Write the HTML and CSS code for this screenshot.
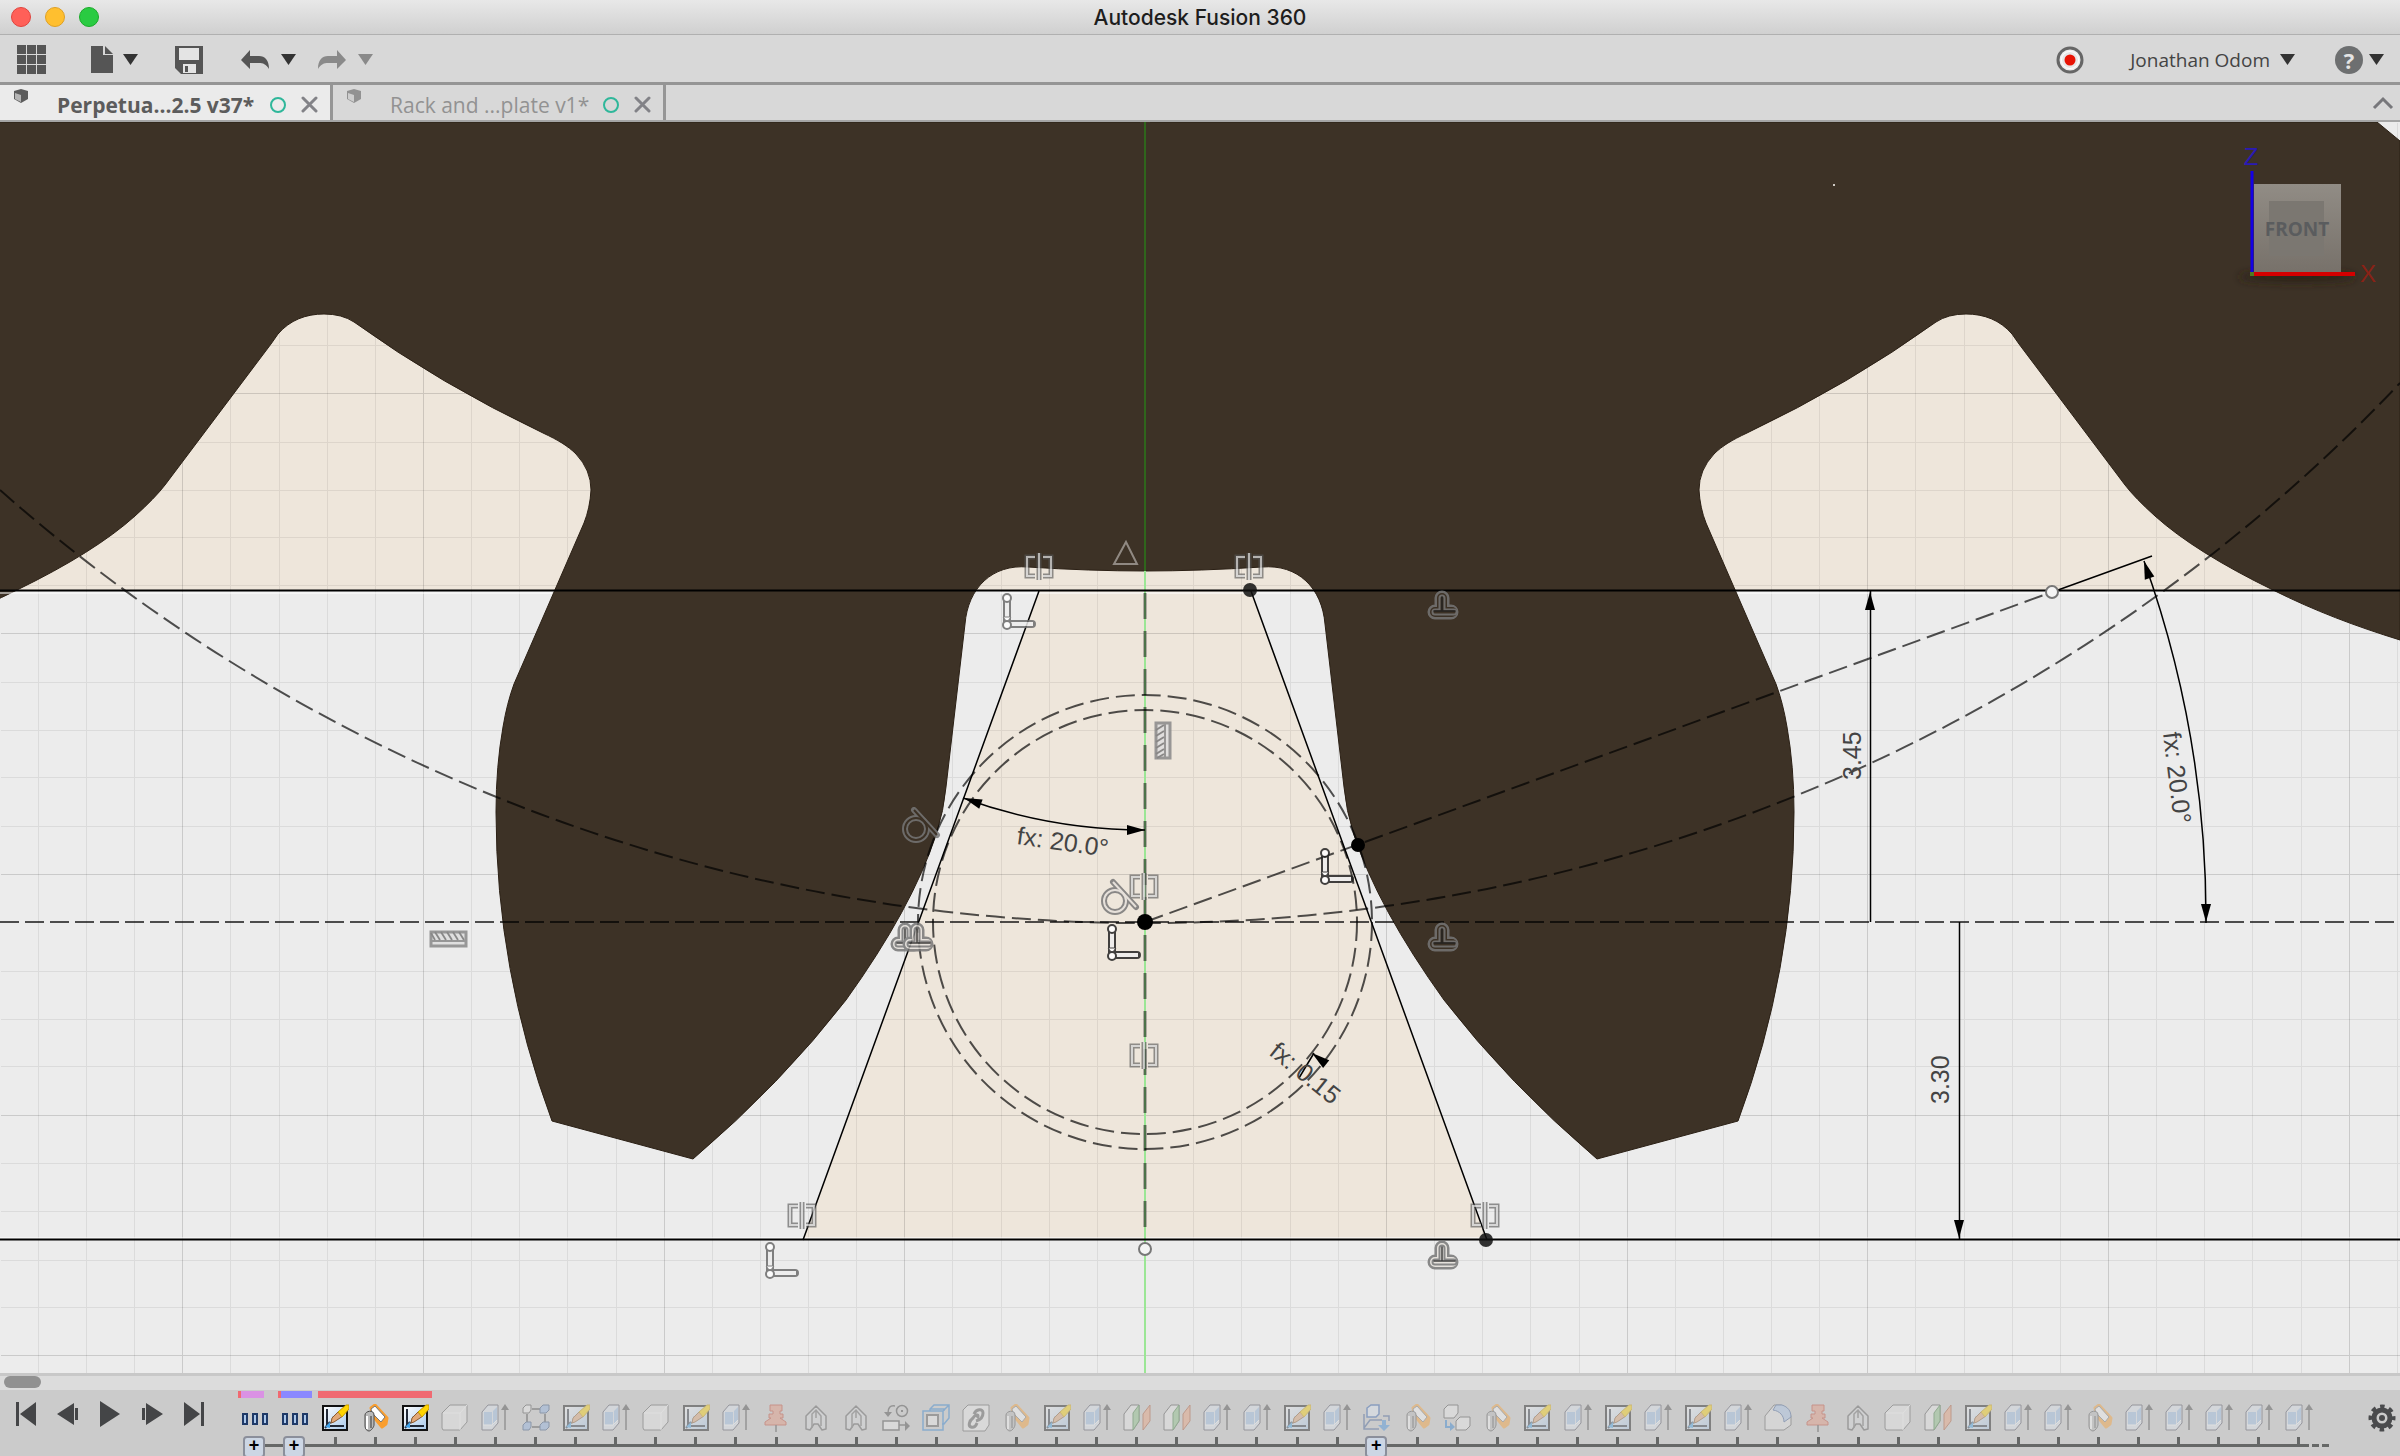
FILE: index.html
```html
<!DOCTYPE html>
<html lang="en">
<head>
<meta charset="utf-8">
<title>Autodesk Fusion 360</title>
<link rel="stylesheet" href="styles.css">
</head>
<body>
<svg class="defs" aria-hidden="true">
  <defs>
    <linearGradient id="paper" x1="0" y1="0" x2="1" y2="1"><stop offset="0" stop-color="#fff"/><stop offset="1" stop-color="#a9c9ea"/></linearGradient>
    <linearGradient id="cubeFace" x1="0" y1="0" x2="0" y2="1"><stop offset="0" stop-color="#918c85"/><stop offset="1" stop-color="#77716a"/></linearGradient>
    <filter id="soft" x="-20%" y="-200%" width="140%" height="500%"><feGaussianBlur stdDeviation="4"/></filter>

    <symbol id="i-group" viewBox="0 0 28 28"><g fill="#a9c6ea" stroke="#1f3a68" stroke-width="2"><path d="M2 10h4v10H2zM12 10h4v10h-4zM22 10h4v10h-4z"/></g></symbol>
    <symbol id="i-sketch" viewBox="0 0 28 28"><path d="M2 2h24v24H2z" fill="url(#paper)" stroke="#111" stroke-width="2"/><path d="M6 5v17h17M9 18l-5 6" fill="none" stroke="#222a38" stroke-width="2"/><path d="M4 23l5-5v6z" fill="#3fa2ea"/><path d="M9 20l3-8 3 4z" fill="#333"/><path d="M11 14l7-7 4 5-9 6-3 1z" fill="#e2a878" stroke="#8a5a30"/><path d="M17 8l8-7h3v4l-7 8z" fill="#ffd400" stroke="#c79a00"/></symbol>
    <symbol id="i-joint" viewBox="0 0 28 28"><path d="M10 4l4-3 12 13-1 6-4 3-9-11z" fill="#ff9a1f" stroke="#ff9a1f" stroke-width="3" stroke-linejoin="round" opacity=".9"/><path d="M10 5l4-3 10 11-4 5-9-9z" fill="#fff" stroke="#777"/><path d="M4 11c0-4 9-6 9 0v10c0 2-3 6-5 6s-4-2-4-5z" fill="#b9b9b9" stroke="#4a4a4a"/><path d="M6 12v13" stroke="#fff" stroke-width="2"/><path d="M10 12v12" stroke="#777" stroke-width="2"/></symbol>
    <symbol id="i-box" viewBox="0 0 28 28"><path d="M1 9l8-8h17v17l-7 8H2l-1-2z" fill="#e9e9e9" stroke="#555" stroke-linejoin="round"/><path d="M2 9h17l7-8M19 9v17" fill="none" stroke="#fff"/></symbol>
    <symbol id="i-extrude" viewBox="0 0 28 28"><path d="M1 8l6-7h10v18l-6 7H1z" fill="#dfe8f2" stroke="#445" stroke-linejoin="round"/><path d="M3 8h8v13H3zM12 7l4-4v13l-4 5z" fill="#9dbfe8"/><path d="M2 21h9l5-5" fill="none" stroke="#fff"/><path d="M24 26V5" stroke="#444" stroke-width="1.5"/><path d="M20 6L24 0l4 6z" fill="#444"/></symbol>
    <symbol id="i-pattern" viewBox="0 0 28 28"><path d="M10 5h8M5 10v8M10 23h8M23 10v8" stroke="#333" stroke-width="1.500"/><path d="M1 4l3-3h5v5L7 9H1z" fill="#eee" stroke="#444"/><g fill="#8fb2e2" stroke="#2f4a78"><path d="M18 4l3-3h6v5l-3 3h-6zM1 21l3-3h5v5l-2 3H1zM18 21l3-3h6v5l-3 3h-6z"/></g></symbol>
    <symbol id="i-pin" viewBox="0 0 28 28"><g fill="#e8957c" stroke="#c0412a"><path d="M8 1h12v6h-2v3h3v4h-3l6 4v3H3v-3l6-4H7v-4h4V7H8z"/></g><path d="M14 21v7" stroke="#444" stroke-width="1.500"/></symbol>
    <symbol id="i-rib" viewBox="0 0 28 28"><path d="M4 12L14 2l10 10v13l-4 1-4-6h-4l-4 6-4-1z" fill="#d6d8da" stroke="#555" stroke-width="1.500" stroke-linejoin="round"/><path d="M10 24V10l4-4 5 6v10M14 6v8" fill="none" stroke="#666" stroke-width="1.500"/></symbol>
    <symbol id="i-swap" viewBox="0 0 28 28"><path d="M1 17h16v9H1zM17 21h8" fill="#eee" stroke="#444" stroke-width="1.500"/><path d="M23 17l5 5-5 5z" fill="#444"/><ellipse cx="20" cy="7" rx="5.500" ry="5.500" fill="none" stroke="#444" stroke-width="1.500"/><path d="M13 2C8 1 6 4 6 9" fill="none" stroke="#444" stroke-width="1.500"/><path d="M2 8h8l-4 5zM19 6h2v2h-2z" fill="#444"/></symbol>
    <symbol id="i-shell" viewBox="0 0 28 28"><path d="M8 7V5l4-4h15v13l-5 6h-2M1 7h20v19H1zM21 7l6-6M8 5h14v2" fill="none" stroke="#2a7fd0" stroke-width="1.500"/><path d="M5 11h11v11H5z" fill="#eee" stroke="#555" stroke-width="2"/></symbol>
    <symbol id="i-link" viewBox="0 0 28 28"><path d="M1 6l5-5h21v20l-4 6H1z" fill="#eee" stroke="#555" stroke-linejoin="round"/><g fill="none" stroke="#555" stroke-width="3"><path d="M12 10c2-5 9-6 9-1 0 4-3 7-7 8M15 14c3-3-1-5-4 0-4 3-5 8-2 9s5-1 6-4"/></g></symbol>
    <symbol id="i-split" viewBox="0 0 28 28"><path d="M1 10l7-9h8v16l-6 9H1z" fill="#ececec" stroke="#444"/><path d="M10 9l6-8v16l-6 9z" fill="#8fc48a" stroke="#3c7a3a"/><path d="M20 10l7-9v16l-7 9z" fill="#f0a27c" stroke="#a8502c"/></symbol>
    <symbol id="i-insert" viewBox="0 0 28 28"><path d="M4 4l4-3h8v9l-3 3H4z" fill="#e3ecf8" stroke="#2b5cae" stroke-width="1.500"/><path d="M1 10v15h15M1 24l6-8h12M20 12h6v5" fill="none" stroke="#3c5c94" stroke-width="1.500"/><path d="M19 16h4v5h4l-6 6-6-6h4z" fill="#3f8ede"/></symbol>
    <symbol id="i-copy" viewBox="0 0 28 28"><g fill="#eee" stroke="#444"><path d="M1 5l4-4h10v8l-4 5H1zM13 17l4-4h10v9l-4 4H13z"/></g><path d="M3 16v7h5" fill="none" stroke="#2a7fd0" stroke-width="2"/><path d="M7 18l5 5-5 4z" fill="#2a7fd0"/></symbol>
    <symbol id="i-fillet" viewBox="0 0 28 28"><path d="M1 12l9-11h7c6 2 9 6 10 12v8l-7 5H1z" fill="#e4e4e4" stroke="#555"/><path d="M9 6l3-5h6c6 2 9 6 9 12l-7 5c0-6-4-11-11-12z" fill="#a9c6ea" stroke="#3c5c94"/></symbol>

    <symbol id="i-caret" viewBox="0 0 15 11"><path d="M0 0h15L7.500 11z" fill="currentColor"/></symbol>
    <symbol id="i-undo" viewBox="0 0 28 20"><path d="M0 10L9 0v6h9c6 0 10 4 10 13-3-5-6-6-10-6H9v6z" fill="currentColor"/></symbol>
    <symbol id="i-cube" viewBox="0 0 14 14"><path d="M0 2l7-2 7 2v8l-7 4-7-4z" fill="currentColor"/><path d="M1 4l6 2v7l-6-3z" fill="#fff" opacity=".55"/></symbol>
    <symbol id="i-close" viewBox="0 0 17 17"><path d="M2 2l13 13M15 2L2 15" stroke="currentColor" stroke-width="3" stroke-linecap="round"/></symbol>

    <g id="c-sym" fill="none"><path d="M-4 -9H-12V10H-4M4 -9H12V10H4M0 -13V14" stroke="#555" stroke-opacity=".75" stroke-width="5"/><path d="M-4 -9H-12V10H-4M4 -9H12V10H4M0 -13V14" stroke="#e2e2e2" stroke-opacity=".85" stroke-width="2"/></g>
    <g id="c-coin" fill="none"><path d="M-11 -14V12H14" stroke="currentColor" stroke-width="8" stroke-linecap="round"/><path d="M-11 -14V12H15" stroke="#eee" stroke-width="4"/><path d="M-15 5H-7L-11 10z" fill="#fff" stroke="currentColor"/><g fill="#fff" stroke="currentColor" stroke-width="2"><circle cx="-11" cy="-14" r="4"/><circle cx="-11" cy="13" r="4"/></g></g>
    <g id="c-perp" fill="none" stroke-linecap="round"><path d="M0 -7V7M-7 7H9" stroke="#777" stroke-width="15"/><path d="M0 -7V7M-7 7H10" stroke="currentColor" stroke-width="10"/><path d="M0 -7V7M-7 7H12" stroke="#777" stroke-width="7"/><path d="M0 -7V7M-7 7H12" stroke="currentColor" stroke-width="3"/><path d="M0 -8V6M-8 6H13" stroke="#222" stroke-width="1.500"/></g>
    <g id="c-line"><path d="M-7 -17H7V18H-7z" fill="#ddd" stroke="#888" stroke-width="3"/><path d="M2 -16V17" stroke="#888" stroke-width="2"/><path d="M-7 -10l8 -5M-7 -4l8 -5M-7 2l8 -5M-7 8l8 -5M-7 14l8 -5M-6 18l7 -4" stroke="#777" stroke-width="2"/></g>
    <g id="c-tan" fill="none"><path d="M-2 -19L21 6" stroke="#777" stroke-width="6" stroke-linecap="round"/><circle r="11" stroke="#777" stroke-width="6"/><circle r="11" stroke="currentColor" stroke-width="2"/><path d="M-2 -19L21 6" stroke="currentColor" stroke-width="2"/></g>
    <path id="arrow" d="M0 0L-18 -5V5z"/>
    <path id="wheel" d="M1144 122H2377L2400 141V640C2355 626 2315 611 2273 590Q2195 552 2155 516Q2135 498 2125 485L2019 344L2012 334C2000 320 1984 314 1966 314Q1948 314 1936 322Q1850 384 1747 433C1732 440 1722 446 1714 454Q1699 470 1699 490Q1700 508 1706 523L1776 684Q1783 703 1787 727Q1794 766 1794 812Q1794 970 1738 1121L1597 1159Q1508 1083 1444 1000Q1378 908 1354 835Q1346 810 1344 787L1325 624C1322 588 1298 564 1262 567Q1200 571 1144 571z"/>
  </defs>
</svg>

<div class="app">
  <header class="titlebar">
    <div class="lights"><button class="light red" aria-label="Close window"></button><button class="light yellow" aria-label="Minimise window"></button><button class="light green" aria-label="Zoom window"></button></div>
    <h1 class="title">Autodesk Fusion 360</h1>
  </header>

  <nav class="toolbar" aria-label="Application bar">
    <button class="tool" aria-label="Data panel"><svg width="30" height="30" viewBox="0 0 30 30"><path d="M0 0h9v9H0zM10 0h9v9h-9zM20 0h9v9h-9zM0 10h9v9H0zM10 10h9v9h-9zM20 10h9v9h-9zM0 20h9v9H0zM10 20h9v9h-9zM20 20h9v9h-9z" fill="#555"/></svg></button>
    <button class="tool file" aria-label="File"><svg width="22" height="27" viewBox="0 0 22 27"><path d="M0 0h12v9h10v18H0z" fill="#555"/><path d="M14 0l8 8h-8z" fill="#555"/></svg><svg width="15" height="11"><use href="#i-caret"/></svg></button>
    <button class="tool save" aria-label="Save"><svg width="28" height="28" viewBox="0 0 28 28"><path d="M0 0h28v28H6l-6-6z" fill="#555"/><path d="M4 2h20v12H4zM8 18h13v9H8z" fill="#e4e4e4"/><path d="M10 20h3v6h-3z" fill="#555"/></svg></button>
    <button class="tool undo" aria-label="Undo"><svg width="28" height="20"><use href="#i-undo"/></svg><svg class="dark" width="15" height="11"><use href="#i-caret"/></svg></button>
    <button class="tool redo" aria-label="Redo"><svg class="flip" width="28" height="20"><use href="#i-undo"/></svg><svg width="15" height="11"><use href="#i-caret"/></svg></button>
    <button class="tool record" aria-label="Job status"><svg width="28" height="28" viewBox="0 0 28 28"><circle cx="14" cy="14" r="12" fill="#eee" stroke="#666" stroke-width="3"/><circle cx="14" cy="14" r="8.500" fill="#e6e6e6" stroke="#fff"/><circle cx="14" cy="14" r="5.500" fill="#e81405"/></svg></button>
    <button class="tool user">Jonathan Odom<svg class="dark" width="15" height="11"><use href="#i-caret"/></svg></button>
    <button class="tool help" aria-label="Help"><span class="help-mark">?</span><svg class="dark" width="15" height="11"><use href="#i-caret"/></svg></button>
  </nav>

  <div class="tabs">
    <div class="tab active"><svg class="cube" width="14" height="14"><use href="#i-cube"/></svg><a class="tab-name" href="#canvas">Perpetua...2.5 v37*</a><span class="ring"></span><button class="close" aria-label="Close tab"><svg width="17" height="17"><use href="#i-close"/></svg></button></div>
    <div class="tab"><svg class="cube" width="14" height="14"><use href="#i-cube"/></svg><a class="tab-name" href="#canvas">Rack and ...plate v1*</a><span class="ring"></span><button class="close" aria-label="Close tab"><svg width="17" height="17"><use href="#i-close"/></svg></button></div>
    <button class="collapse" aria-label="Collapse"><svg width="22" height="14" viewBox="0 0 22 14"><path d="M2 12L11 3l9 9" fill="none" stroke="#77777b" stroke-width="3"/></svg></button>
  </div>

  <main class="canvas" id="canvas">
    <svg class="drawing" viewBox="0 122 2400 1251" preserveAspectRatio="xMidYMid slice">
      <path d="M0 122H2400V591H0z" fill="#eee6db"/>
      <path d="M2360 122H2400V160z" fill="#ececec"/>
      <path d="M1039 591H1251L1487 1240H803z" fill="#eee6db"/>
      <g fill="none" stroke="#000" shape-rendering="crispEdges" transform="translate(.5 .5)">
        <path stroke-opacity=".07" d="M38 122V1373M86 122V1373M134 122V1373M230 122V1373M279 122V1373M327 122V1373M375 122V1373M471 122V1373M519 122V1373M567 122V1373M616 122V1373M712 122V1373M760 122V1373M808 122V1373M856 122V1373M952 122V1373M1001 122V1373M1049 122V1373M1097 122V1373M1193 122V1373M1241 122V1373M1290 122V1373M1338 122V1373M1434 122V1373M1482 122V1373M1530 122V1373M1579 122V1373M1675 122V1373M1723 122V1373M1771 122V1373M1819 122V1373M1915 122V1373M1964 122V1373M2012 122V1373M2060 122V1373M2156 122V1373M2204 122V1373M2252 122V1373M2301 122V1373M2397 122V1373M0 345H2400M0 442H2400M0 490H2400M0 537H2400M0 585H2400M0 682H2400M0 730H2400M0 777H2400M0 826H2400M0 971H2400M0 1019H2400M0 1066H2400M0 1163H2400M0 1211H2400M0 1260H2400M0 1307H2400"/>
        <path stroke-opacity=".14" d="M182 122V1373M423 122V1373M664 122V1373M904 122V1373M1386 122V1373M1627 122V1373M1867 122V1373M2108 122V1373M2349 122V1373M0 393H2400M0 633H2400M0 874H2400M0 1115H2400M0 1355H2400"/>
      </g>
      <g fill="#3d3226" stroke="#2b2015"><use href="#wheel"/><use href="#wheel" transform="translate(2290 0) scale(-1 1)"/></g>
      <path d="M1140 122H1150V570H1140z" fill="#3d3226"/>
      <path d="M0 593H552M1000 593H1290M1738 593H2270M0 1238H2400" stroke="#fff"/>

      <g shape-rendering="crispEdges"><path d="M1145 122V571" stroke="#2f651c" stroke-width="2"/><path d="M1145 571V1373" stroke="#9be695" stroke-width="2"/></g>
      <g fill="none" stroke="#000" stroke-width="2" stroke-opacity=".68" stroke-dasharray="19 7">
        <path d="M1145 593V1240" stroke-width="3" stroke-opacity=".5" stroke-dasharray="26 12"/>
        <path d="M0 922H2400" stroke-dasharray="19 6"/>
        <circle cx="1145" cy="922" r="227"/>
        <circle cx="1145" cy="922" r="212"/>
        <path d="M0 490A1729 1729 0 0 0 2400 383"/>
        <path d="M1145 922L2052 592"/>
      </g>
      <g fill="none" stroke="#000" stroke-width="1.500">
        <path d="M0 590.500H2400M0 1239.500H2400" stroke-width="2"/>
        <path d="M1039 591L803 1240M1251 591L1487 1240M2058 590L2152 556"/>
        <path d="M963 798A530 530 0 0 0 1145 830M2144 561A1061 1061 0 0 1 2206 923"/>
        <path d="M1870.500 591V922M1959.500 922V1240M1299 1078L1314 1053"/>
      </g>
      <use href="#arrow" transform="translate(964 798) rotate(200)"/>
      <use href="#arrow" transform="translate(1145 830)"/>
      <use href="#arrow" transform="translate(2144 561) rotate(-108)"/>
      <use href="#arrow" transform="translate(2206 922) rotate(90)"/>
      <use href="#arrow" transform="translate(1870 592) rotate(-90)"/>
      <use href="#arrow" transform="translate(1959 1238) rotate(90)"/>
      <use href="#arrow" transform="translate(1312 1053) rotate(218)"/>

      <g class="dimension">
        <text transform="translate(1016 844) rotate(8)">fx: 20.0°</text>
        <text transform="translate(2163 733) rotate(83)">fx: 20.0°</text>
        <text transform="translate(1861 780) rotate(-90)">3.45</text>
        <text transform="translate(1949 1104) rotate(-90)">3.30</text>
        <text transform="translate(1268 1054) rotate(39)">fx: 0.15</text>
      </g>

      <circle cx="1145" cy="922" r="8"/><circle cx="1358" cy="845" r="7"/>
      <g fill="#111" fill-opacity=".85"><circle cx="1250" cy="590" r="7"/><circle cx="1486" cy="1240" r="7"/></g>
      <g fill="#f4f4f4" stroke="#777" stroke-width="2"><circle cx="2052" cy="592" r="6"/><circle cx="1145" cy="1249" r="6"/></g>

      <g opacity=".85">
        <use href="#c-sym" x="1039" y="566"/><use href="#c-sym" x="1249" y="566"/><use href="#c-sym" x="1144" y="886"/><use href="#c-sym" x="1144" y="1055"/><use href="#c-sym" x="802" y="1215"/><use href="#c-sym" x="1485" y="1215"/>
        <path d="M1126 542L1137 564H1114z" fill="none" stroke="#a09a94" stroke-width="2"/>
        <use class="on-gap" href="#c-coin" x="1018" y="612"/><use class="on-plate" href="#c-coin" x="1336" y="867"/><use class="on-plate" href="#c-coin" x="1123" y="943"/><use class="on-gap" href="#c-coin" x="781" y="1261"/>
        <use class="on-part" href="#c-perp" x="1442" y="605"/><use class="on-part" href="#c-perp" x="1442" y="937"/><use class="on-light" href="#c-perp" x="1442" y="1255"/><use class="on-light" href="#c-perp" x="905" y="937"/><use class="on-light" href="#c-perp" x="917" y="937"/>
        <use href="#c-line" x="1163" y="740"/><use href="#c-line" transform="translate(449 939) rotate(90)"/>
        <use class="on-part" href="#c-tan" x="916" y="829"/><use class="on-light" href="#c-tan" x="1115" y="901"/>
      </g>

      <path d="M1833 184h2v2h-2z" fill="#cfcac4"/>
      <ellipse cx="2297" cy="277" rx="58" ry="5" fill="#2a2118" filter="url(#soft)"/>
      <path d="M2254 184H2341V273H2254z" fill="url(#cubeFace)"/>
      <path d="M2269 201H2324V256H2269z" fill="#7b7771"/>
      <path d="M2252 171V273" stroke="#1400e6" stroke-width="3"/><path d="M2252 274H2355" stroke="#d40000" stroke-width="4"/><path d="M2250 272h4v4h-4z" fill="#4f7a20"/>
      <g class="viewcube" text-anchor="middle"><text class="face" x="2297" y="236">FRONT</text><text class="axis" x="2251" y="165" fill="#2a1ab4">Z</text><text class="axis" x="2368" y="282" fill="#8a2216">X</text></g>
    </svg>
  </main>

  <div class="scrollbar"><div class="thumb"></div></div>

  <footer class="bottom">
    <div class="playback">
      <button aria-label="Go to start"><svg width="20" height="26" viewBox="0 0 20 26"><path d="M0 1h3v24H0zM20 1v24L4 13z" fill="#444547"/></svg></button>
      <button aria-label="Step back"><svg width="22" height="26" viewBox="0 0 22 26"><path d="M17 2v22L0 13zM18 7h3v12h-3z" fill="#444547"/></svg></button>
      <button aria-label="Play"><svg width="20" height="26" viewBox="0 0 20 26"><path d="M0 0l20 13L0 26z" fill="#444547"/></svg></button>
      <button aria-label="Step forward"><svg width="22" height="26" viewBox="0 0 22 26"><path d="M5 2v22l17-11zM1 7h3v12H1z" fill="#444547"/></svg></button>
      <button aria-label="Go to end"><svg width="20" height="26" viewBox="0 0 20 26"><path d="M17 1h3v24h-3zM0 1v24l16-12z" fill="#444547"/></svg></button>
    </div>
    <div class="timeline">
      <div class="bars"><span class="bar pink"></span><span class="bar blue"></span><span class="bar coral"></span></div>
      <ol class="features">
        <li class="live plus"><button aria-label="Group"><svg><use href="#i-group"/></svg></button></li>
        <li class="live plus"><button aria-label="Group"><svg><use href="#i-group"/></svg></button></li>
        <li class="live"><button aria-label="Sketch"><svg><use href="#i-sketch"/></svg></button></li>
        <li class="live"><button aria-label="Joint"><svg><use href="#i-joint"/></svg></button></li>
        <li class="live"><button aria-label="Sketch"><svg><use href="#i-sketch"/></svg></button></li>
        <li><button aria-label="Body"><svg><use href="#i-box"/></svg></button></li>
        <li><button aria-label="Extrude"><svg><use href="#i-extrude"/></svg></button></li>
        <li><button aria-label="Pattern"><svg><use href="#i-pattern"/></svg></button></li>
        <li><button aria-label="Sketch"><svg><use href="#i-sketch"/></svg></button></li>
        <li><button aria-label="Extrude"><svg><use href="#i-extrude"/></svg></button></li>
        <li><button aria-label="Body"><svg><use href="#i-box"/></svg></button></li>
        <li><button aria-label="Sketch"><svg><use href="#i-sketch"/></svg></button></li>
        <li><button aria-label="Extrude"><svg><use href="#i-extrude"/></svg></button></li>
        <li><button aria-label="Pin"><svg><use href="#i-pin"/></svg></button></li>
        <li><button aria-label="Rib"><svg><use href="#i-rib"/></svg></button></li>
        <li><button aria-label="Rib"><svg><use href="#i-rib"/></svg></button></li>
        <li><button aria-label="Move"><svg><use href="#i-swap"/></svg></button></li>
        <li><button aria-label="Shell"><svg><use href="#i-shell"/></svg></button></li>
        <li><button aria-label="Link"><svg><use href="#i-link"/></svg></button></li>
        <li><button aria-label="Joint"><svg><use href="#i-joint"/></svg></button></li>
        <li><button aria-label="Sketch"><svg><use href="#i-sketch"/></svg></button></li>
        <li><button aria-label="Extrude"><svg><use href="#i-extrude"/></svg></button></li>
        <li><button aria-label="Split"><svg><use href="#i-split"/></svg></button></li>
        <li><button aria-label="Split"><svg><use href="#i-split"/></svg></button></li>
        <li><button aria-label="Extrude"><svg><use href="#i-extrude"/></svg></button></li>
        <li><button aria-label="Extrude"><svg><use href="#i-extrude"/></svg></button></li>
        <li><button aria-label="Sketch"><svg><use href="#i-sketch"/></svg></button></li>
        <li><button aria-label="Extrude"><svg><use href="#i-extrude"/></svg></button></li>
        <li class="plus"><button aria-label="Insert"><svg><use href="#i-insert"/></svg></button></li>
        <li><button aria-label="Joint"><svg><use href="#i-joint"/></svg></button></li>
        <li><button aria-label="Copy"><svg><use href="#i-copy"/></svg></button></li>
        <li><button aria-label="Joint"><svg><use href="#i-joint"/></svg></button></li>
        <li><button aria-label="Sketch"><svg><use href="#i-sketch"/></svg></button></li>
        <li><button aria-label="Extrude"><svg><use href="#i-extrude"/></svg></button></li>
        <li><button aria-label="Sketch"><svg><use href="#i-sketch"/></svg></button></li>
        <li><button aria-label="Extrude"><svg><use href="#i-extrude"/></svg></button></li>
        <li><button aria-label="Sketch"><svg><use href="#i-sketch"/></svg></button></li>
        <li><button aria-label="Extrude"><svg><use href="#i-extrude"/></svg></button></li>
        <li><button aria-label="Fillet"><svg><use href="#i-fillet"/></svg></button></li>
        <li><button aria-label="Pin"><svg><use href="#i-pin"/></svg></button></li>
        <li><button aria-label="Rib"><svg><use href="#i-rib"/></svg></button></li>
        <li><button aria-label="Body"><svg><use href="#i-box"/></svg></button></li>
        <li><button aria-label="Split"><svg><use href="#i-split"/></svg></button></li>
        <li><button aria-label="Sketch"><svg><use href="#i-sketch"/></svg></button></li>
        <li><button aria-label="Extrude"><svg><use href="#i-extrude"/></svg></button></li>
        <li><button aria-label="Extrude"><svg><use href="#i-extrude"/></svg></button></li>
        <li><button aria-label="Joint"><svg><use href="#i-joint"/></svg></button></li>
        <li><button aria-label="Extrude"><svg><use href="#i-extrude"/></svg></button></li>
        <li><button aria-label="Extrude"><svg><use href="#i-extrude"/></svg></button></li>
        <li><button aria-label="Extrude"><svg><use href="#i-extrude"/></svg></button></li>
        <li><button aria-label="Extrude"><svg><use href="#i-extrude"/></svg></button></li>
        <li><button aria-label="Extrude"><svg><use href="#i-extrude"/></svg></button></li>
      </ol>
    </div>
    <button class="settings" aria-label="Timeline settings"><svg width="28" height="28" viewBox="-14 -14 28 28"><g fill="none" stroke="#4a4b4d"><circle r="8" stroke-width="5"/><circle r="11.500" stroke-width="4" stroke-dasharray="4.500 4.530" stroke-dashoffset="2.250"/></g><circle r="3" fill="#4a4b4d"/></svg></button>
  </footer>
</div>
</body>
</html>
```
FILE: styles.css
```css
* { box-sizing: border-box; }
html, body { height: 100%; margin: 0; }
body { font-family: "Open Sans", "Noto Sans", sans-serif; color: #3f3f3f; background: #ececec; }
button { border: 0; padding: 0; margin: 0; background: none; font: inherit; color: inherit; display: flex; align-items: center; justify-content: center; }
svg { display: block; flex: none; }
.defs { position: absolute; width: 0; height: 0; }
.app { min-height: 100%; display: flex; flex-direction: column; }

.titlebar { height: 35px; display: grid; grid-template-columns: 1fr auto 1fr; align-items: center; background: linear-gradient(#e8e8e8, #d0d0d0); border-bottom: 1px solid #b0b0b0; }
.lights { display: flex; gap: 14px; padding-left: 11px; }
.light { width: 20px; height: 20px; border-radius: 50%; border: 1px solid #e0443e; background: #ff6058; }
.light.yellow { border-color: #dfa023; background: #ffbf2f; }
.light.green { border-color: #1aab29; background: #2acb42; }
.title { margin: 0; padding-top: 1px; font: 500 21px/24px Inter, sans-serif; color: #1d1d1d; }

.toolbar { height: 50px; padding: 2px 16px 0 17px; display: flex; align-items: center; background: #d8d8d8; border-bottom: 3px solid #959595; }
.tool { gap: 10px; color: #555; }
.file { margin-left: 44px; color: #333; }
.save { margin-left: 37px; }
.undo { margin-left: 38px; gap: 12px; }
.redo { margin-left: 22px; gap: 12px; color: #8a8a8a; }
.dark { color: #333; }
.flip { transform: scaleX(-1); }
.record { margin-left: auto; }
.user { margin-left: 46px; font-size: 19px; line-height: 24px; color: #444; }
.help { margin-left: 40px; gap: 6px; }
.help-mark { width: 28px; height: 28px; border-radius: 50%; background: #6d6f70; color: #e4e4e4; font-weight: 700; font-size: 22px; line-height: 28px; }

.tabs { height: 37px; display: flex; background: #d8d8d8; border-bottom: 2px solid #a5a5a5; }
.tab { width: 333px; padding: 4px 12px 0 14px; display: flex; align-items: center; border-right: 3px solid #969696; color: #929292; }
.tab.active { background: #ebebeb; color: #5c5c5c; }
.tab.active .tab-name { font-weight: 700; }
.tab-name { flex: 1; margin-left: 29px; font-size: 21px; line-height: 28px; color: inherit; text-decoration: none; white-space: nowrap; }
.cube { align-self: flex-start; }
.ring { width: 16px; height: 16px; border: 2px solid #2fb79a; border-radius: 50%; }
.close { margin-left: 15px; color: #828287; }
.collapse { margin-left: auto; padding-right: 6px; }

.canvas { flex: 1; min-height: 0; position: relative; background: #ececec; }
.drawing { position: absolute; inset: 0; width: 100%; height: 100%; }
.dimension { font: 25px "Liberation Sans", Arial, sans-serif; fill: #444; }
.face { font: 700 19px "Open Sans", sans-serif; fill: #5a5c5e; }
.axis { font: 24px "Liberation Sans", Arial, sans-serif; }
.on-part { color: #3d3226; }
.on-light { color: #e4e0da; }
.on-gap { color: #6c6c6c; }
.on-plate { color: #222; }

.scrollbar { height: 17px; padding: 0 4px; background: #dcdcdc; border-top: 3px solid #c8c8c8; }
.thumb { width: 37px; height: 12px; border-radius: 6px; background: #919191; }

.bottom { height: 66px; display: flex; background: #cbcbcb; }
.playback { width: 235px; padding: 11px 0 0 5px; display: flex; align-items: flex-start; }
.playback button { width: 42px; }
.timeline { flex: 1; min-width: 0; }
.bars { display: flex; height: 14px; padding: 1px 0 0 3px; }
.bar { height: 7px; margin-right: 14px; background: #f06a72; }
.pink { width: 26px; background: linear-gradient(90deg, #f06a72 3px, #da92e4 3px); }
.blue { width: 34px; margin-right: 6px; background: linear-gradient(90deg, #f06a72 3px, #8a88ff 3px); }
.coral { width: 114px; }
.features { list-style: none; margin: 0; padding: 0; display: grid; grid-template-columns: repeat(52, 1fr); }
.features li { position: relative; display: flex; flex-direction: column; align-items: center; height: 51px; }
.features svg { width: 28px; height: 28px; opacity: .4; }
.features .live svg { opacity: 1; }
.features li::after { content: ""; width: 3px; height: 8px; margin-top: 5px; background: #666867; }
.features li::before { content: ""; position: absolute; left: 0; right: 0; top: 40px; height: 3px; background: #666867; }
.features li:first-child::before { left: 20px; }
.features li:last-child::before { right: -10px; background: linear-gradient(90deg, #666867 30px, transparent 30px 33px, #666867 33px 40px, transparent 40px 43px, #666867 43px); }
.features .plus::after { content: "+"; position: absolute; left: 8px; top: 32px; width: 18px; height: 18px; margin: 0; border: 2px solid #8b8f9b; border-radius: 4px; background: #ccd6e4; color: #000; font: 700 18px/14px "Liberation Sans", sans-serif; text-align: center; }
.settings { width: 81px; padding: 14px 4px 0 0; align-items: flex-start; justify-content: flex-end; }
```
